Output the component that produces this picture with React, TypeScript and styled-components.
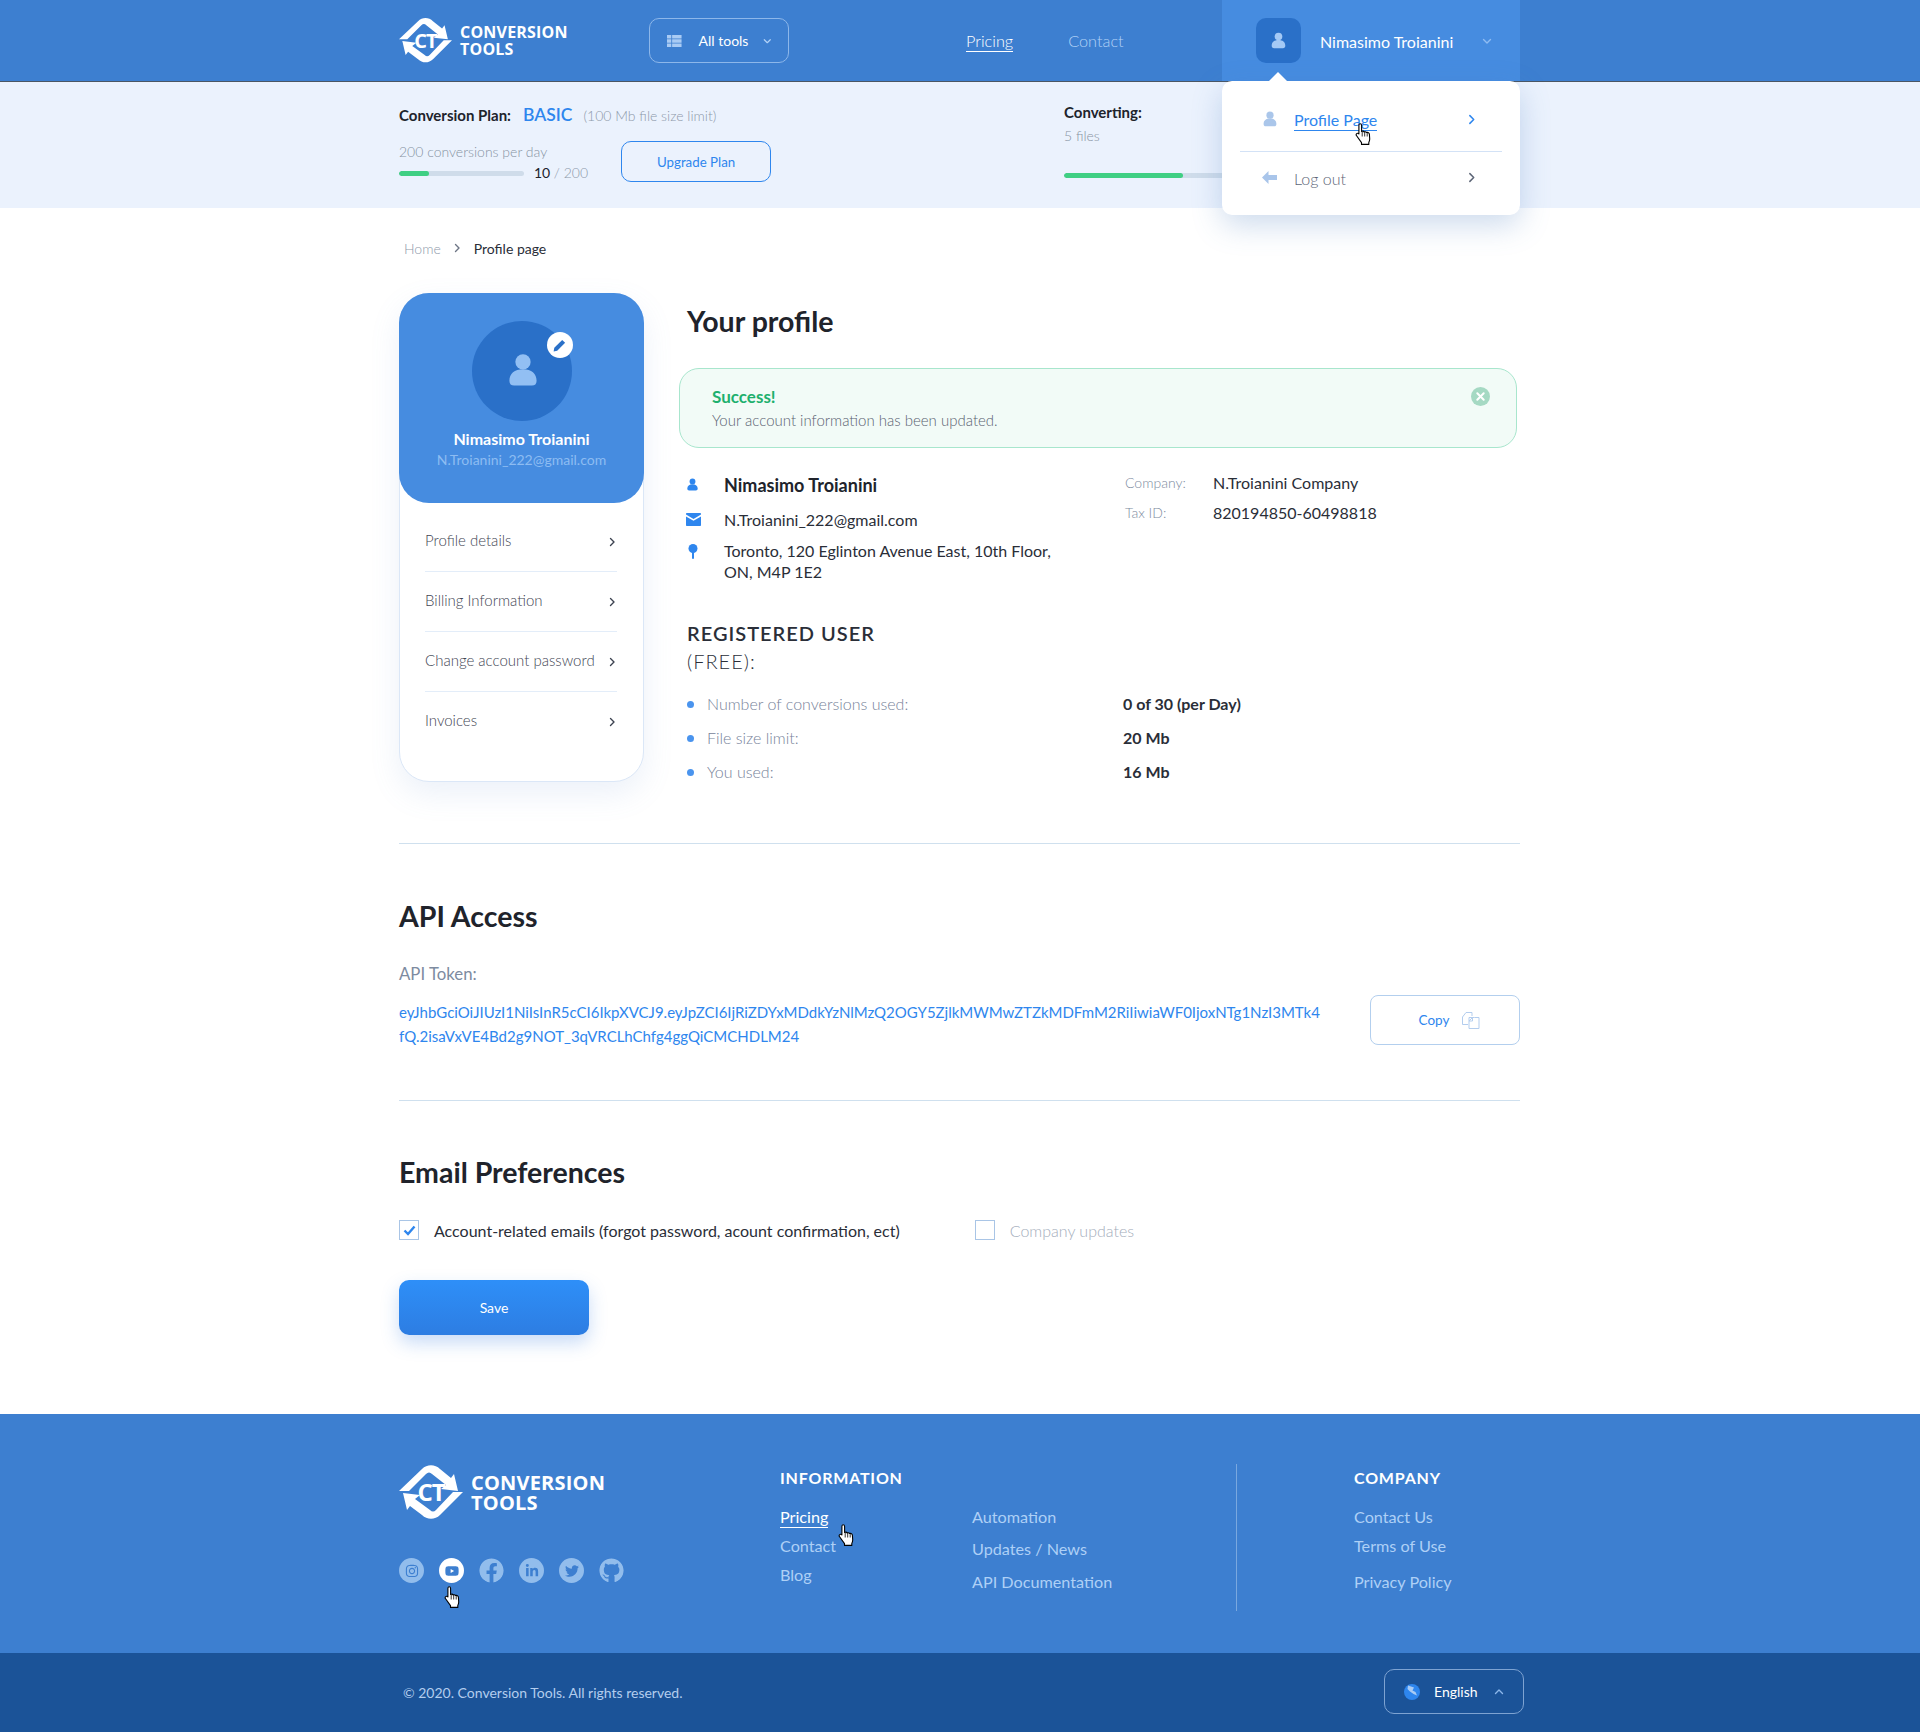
import React from "react";
import styled, { createGlobalStyle } from "styled-components";
import {
  FaFacebook,
  FaGithub,
  FaInstagram,
  FaLinkedinIn,
  FaTwitter,
  FaYoutube,
} from "react-icons/fa";

const GlobalStyle = createGlobalStyle`
  html, body {
    margin: 0;
    padding: 0;
    background: #ffffff;
    font-family: Lato, "Open Sans", sans-serif;
    color: #20232b;
  }
  * { box-sizing: border-box; }
  a { text-decoration: none; color: inherit; }
`;

const Wrap = styled.div`
  width: 1121px;
  margin: 0 0 0 399px;
`;

const Chevron: React.FC<{ dir?: "right" | "down" | "up"; size?: number; color?: string }> = ({
  dir = "right",
  size = 10,
  color = "#3c4250",
}) => {
  const d = dir === "right" ? "M3.5 1.5 7 5 3.5 8.5" : dir === "down" ? "M1.5 3.5 5 7l3.5-3.5" : "M1.5 6.5 5 3l3.5 3.5";
  return (
    <svg width={size} height={size} viewBox="0 0 10 10" fill="none">
      <path d={d} stroke={color} strokeWidth="1.4" strokeLinecap="round" strokeLinejoin="round" />
    </svg>
  );
};

const PersonIcon: React.FC<{ size?: number; color: string }> = ({ size = 16, color }) => (
  <svg width={size} height={size} viewBox="0 0 16 16" fill={color}>
    <circle cx="8" cy="4.2" r="3.6" />
    <path d="M1.6 13c0-3.4 2.4-5.4 6.4-5.4s6.4 2 6.4 5.4c0 1.5-.8 2.3-2.2 2.3H3.800c-1.400 0-2.200-.8-2.200-2.300z" />
  </svg>
);

const Hand: React.FC = () => (
  <svg width="18" height="24" viewBox="0 0 18 24">
    <path
      d="M5.200 1.800c.9 0 1.400.7 1.400 1.600v6.100l.6-.2c.8-.3 1.600 0 1.900.6l.6-.1c.8-.2 1.500.1 1.800.7l.6-.1c1.200-.1 2.200.7 2.300 2l.3 4.300c.1 1.500-.3 2.600-.9 3.700v2H6.500v-1.800L1.600 13.800c-.6-.8-.5-1.700.1-2.200.7-.6 1.600-.4 2.100.2l.1.100V3.400c0-.9.500-1.600 1.300-1.600z"
      fill="#fff"
      stroke="#000"
      strokeWidth="1.100"
      strokeLinejoin="round"
    />
    <path d="M7.200 9.500v5M9.700 9.500v5M12.200 10v4.500" stroke="#000" strokeWidth=".8" fill="none" />
  </svg>
);

const HandSpot = styled.span<{ $left: number; $top: number }>`
  position: absolute;
  left: ${(p) => p.$left}px;
  top: ${(p) => p.$top}px;
  display: block;
  line-height: 0;
  z-index: 5;
`;

const LogoBox = styled.div<{ $big?: boolean }>`
  display: flex;
  align-items: center;
  gap: 8px;
  color: #fff;
  flex: none;
  width: ${(p) => (p.$big ? 206 : 168)}px;
`;

const LogoMark = styled.div`
  position: relative;
  line-height: 0;
  flex: none;
`;

const LogoCT = styled.span<{ $big?: boolean }>`
  position: absolute;
  inset: 0;
  display: flex;
  align-items: center;
  justify-content: center;
  font-family: "Open Sans", sans-serif;
  font-weight: 700;
  font-size: ${(p) => (p.$big ? 24 : 20)}px;
  line-height: 1;
  letter-spacing: -1px;
`;

const LogoText = styled.div<{ $big?: boolean }>`
  font-family: "Open Sans", Lato, sans-serif;
  font-weight: 700;
  font-size: ${(p) => (p.$big ? 20 : 16)}px;
  line-height: ${(p) => (p.$big ? 20 : 17)}px;
  letter-spacing: 0.2px;
  padding-top: ${(p) => (p.$big ? 1 : 0)}px;
  white-space: nowrap;
`;

const Logo: React.FC<{ big?: boolean }> = ({ big }) => {
  const w = big ? 64 : 53;
  return (
    <LogoBox $big={big}>
      <LogoMark>
        <svg width={w} height={w * 0.875} viewBox="0 0 64 56" fill="#fff">
          <path d="M0 27 23 5c5-5 13-5 18 0l11 9 3-4 4 17-17-2 5-4L33 10c-2-2-4-2-6 0L10 27z" />
          <path d="M64 28 41 51c-5 5-13 5-18 0l-12-9-3 4-4-17 17 2-5 4 15 11c2 2 4 2 6 0l17-18z" />
        </svg>
        <LogoCT $big={big}>CT</LogoCT>
      </LogoMark>
      <LogoText $big={big}>
        CONVERSION
        <br />
        TOOLS
      </LogoText>
    </LogoBox>
  );
};

/* header */

const Header = styled.header`
  background: #3d7fd0;
  height: 82px;
  border-bottom: 1px solid #4a5664;
`;

const HeaderRow = styled(Wrap)`
  display: flex;
  height: 81px;
  align-items: center;
  position: relative;
`;

const ToolsButton = styled.button`
  width: 140px;
  height: 45px;
  margin-left: 82px;
  display: flex;
  align-items: center;
  background: transparent;
  border: 1px solid #8db7ea;
  border-radius: 10px;
  color: #fff;
  font: 400 14px Lato, sans-serif;
  padding: 0 16px 0 17px;
  white-space: nowrap;
  flex: none;
`;

const ToolsLabel = styled.span`
  margin: 0 15px 0 17px;
`;

const NavLink = styled.a<{ $active?: boolean }>`
  font-size: 16.3px;
  font-weight: 300;
  line-height: 21px;
  color: ${(p) => (p.$active ? "#fff" : "#b2d2f7")};
  border-bottom: 1px solid ${(p) => (p.$active ? "#fff" : "transparent")};
`;

const Nav = styled.nav`
  display: flex;
  gap: 55px;
  margin-left: 177px;
`;

const UserPanel = styled.div`
  margin-left: auto;
  width: 298px;
  height: 81px;
  background: #468ce0;
  display: flex;
  align-items: center;
  padding-left: 34px;
  color: #fff;
  font-size: 16px;
`;

const UserAvatar = styled.div`
  width: 45px;
  height: 45px;
  border-radius: 10px;
  background: #2a70c8;
  display: flex;
  align-items: center;
  justify-content: center;
  margin-right: 19px;
`;

const UserName = styled.span`
  margin-right: 29px;
  padding-top: 2px;
`;

const Dropdown = styled.div`
  position: absolute;
  z-index: 3;
  top: 81px;
  right: 0;
  width: 298px;
  height: 134px;
  background: #fff;
  border-radius: 10px;
  box-shadow: 0 10px 30px rgba(75, 125, 190, 0.28);
  padding: 0 18px;
  &::before {
    content: "";
    position: absolute;
    top: -9px;
    left: 47px;
    border: 9px solid transparent;
    border-top: 0;
    border-bottom-color: #fff;
  }
`;

const DropItem = styled.div<{ $line?: boolean }>`
  height: ${(p) => (p.$line ? 71 : 60)}px;
  display: flex;
  align-items: center;
  padding: ${(p) => (p.$line ? "9px 0 0 22px" : "0 0 6px 22px")};
  border-bottom: ${(p) => (p.$line ? "1px solid #d3e2f6" : "none")};
  position: relative;
`;

const DropIcon = styled.span`
  width: 32px;
  display: flex;
  margin-top: -3px;
`;

const DropLink = styled.a<{ $on?: boolean }>`
  font-size: 16px;
  font-weight: ${(p) => (p.$on ? 400 : 300)};
  line-height: 20px;
  color: ${(p) => (p.$on ? "#2e86ee" : "#5d6677")};
  border-bottom: 1px solid ${(p) => (p.$on ? "#2e86ee" : "transparent")};
`;

const DropChevron = styled.span`
  margin-left: auto;
  margin-right: 25px;
  display: flex;
  margin-top: -3px;
`;

/* plan strip */

const PlanStrip = styled.section`
  background: #ebf2fd;
  height: 126px;
`;

const PlanRow = styled(Wrap)`
  display: flex;
  padding-top: 22px;
`;

const PlanLeft = styled.div`
  width: 665px;
`;

const PlanLine = styled.div`
  display: flex;
  align-items: baseline;
  height: 24px;
`;

const PlanTitle = styled.span`
  font-size: 15px;
  font-weight: 700;
  color: #20232b;
`;

const PlanName = styled.span`
  font-size: 17.5px;
  font-weight: 600;
  color: #2e86ee;
  margin: 0 11px 0 12px;
`;

const PlanNote = styled.span`
  font-size: 14px;
  font-weight: 300;
  color: #8e99aa;
`;

const UsageRow = styled.div`
  display: flex;
  margin-top: 15px;
`;

const UsageLabel = styled.div`
  font-size: 14px;
  font-weight: 300;
  color: #8792a3;
  line-height: 18px;
`;

const BarLine = styled.div`
  display: flex;
  align-items: center;
  margin-top: 2px;
  font-size: 14px;
  line-height: 20px;
`;

const Track = styled.div<{ $w: number }>`
  width: ${(p) => p.$w}px;
  height: 5px;
  border-radius: 3px;
  background: #cfdcea;
  overflow: hidden;
`;

const Fill = styled.div`
  height: 100%;
  border-radius: 3px;
  background: #3fcf83;
`;

const Count = styled.span`
  margin-left: 10px;
  font-weight: 400;
  span {
    color: #8e99aa;
    font-weight: 300;
  }
`;

const UpgradeButton = styled.button`
  width: 150px;
  height: 41px;
  margin: -2px 0 0 33px;
  background: transparent;
  border: 1px solid #2e86ee;
  border-radius: 10px;
  color: #2e86ee;
  font: 400 13.3px Lato, sans-serif;
`;

const ConvTitle = styled.div`
  font-size: 15px;
  font-weight: 700;
  line-height: 20px;
  margin-top: -2px;
`;

const ConvFiles = styled.div`
  font-size: 14px;
  font-weight: 300;
  color: #8792a3;
  margin-top: 5px;
  line-height: 18px;
`;

const ConvBar = styled.div`
  margin-top: 28px;
`;

/* main */

const Crumbs = styled.div`
  display: flex;
  align-items: center;
  height: 20px;
  margin-top: 30px;
  padding-left: 5px;
  font-size: 14px;
  gap: 11px;
`;

const CrumbHome = styled.a`
  color: #8e99aa;
  font-weight: 300;
`;

const CrumbNow = styled.span`
  color: #2a2e38;
  margin-left: 1px;
`;

const ProfileGrid = styled.div`
  display: flex;
  height: 489px;
  margin-top: 35px;
`;

const Side = styled.aside`
  width: 245px;
  height: 489px;
  border: 1px solid #dbe7f7;
  border-radius: 30px;
  background: #fff;
  box-shadow: 0 12px 30px rgba(110, 150, 210, 0.13);
  flex: none;
`;

const SideHead = styled.div`
  margin: -1px;
  height: 210px;
  border-radius: 30px;
  background: #468ce0;
  display: flex;
  flex-direction: column;
  align-items: center;
  padding-top: 28px;
`;

const BigAvatar = styled.div`
  width: 100px;
  height: 100px;
  border-radius: 50%;
  background: #2a70c8;
  display: flex;
  align-items: center;
  justify-content: center;
  position: relative;
  flex: none;
  padding: 0 0 3px 3px;
`;

const EditBadge = styled.span`
  position: absolute;
  top: 11px;
  right: -1px;
  width: 26px;
  height: 26px;
  border-radius: 50%;
  background: #fff;
  display: flex;
  align-items: center;
  justify-content: center;
`;

const SideName = styled.div`
  color: #fff;
  font-size: 16px;
  font-weight: 700;
  margin-top: 8px;
  line-height: 20px;
`;

const SideMail = styled.div`
  color: #8dbcf2;
  font-size: 14px;
  font-weight: 400;
  margin-top: 2px;
  line-height: 18px;
`;

const SideMenu = styled.div`
  padding: 10px 26px 0 25px;
`;

const SideItem = styled.a<{ $last?: boolean }>`
  display: flex;
  align-items: center;
  justify-content: space-between;
  height: 60px;
  padding-bottom: 4px;
  font-size: 15px;
  font-weight: 300;
  color: #3f4654;
  border-bottom: ${(p) => (p.$last ? "none" : "1px solid #e3edf9")};
`;

const SideArrow = styled.span`
  display: flex;
  margin-top: 4px;
`;

const Main = styled.main`
  flex: 1;
  margin-left: 35px;
`;

const H1 = styled.h1`
  font-size: 28.5px;
  font-weight: 700;
  line-height: 34px;
  margin: 11px 0 0 8px;
  color: #20232b;
`;

const H2 = styled.h2`
  font-size: 28.5px;
  font-weight: 700;
  line-height: 34px;
  margin: 0;
  color: #20232b;
`;

const Alert = styled.div`
  position: relative;
  height: 80px;
  width: 838px;
  margin-top: 30px;
  border: 1px solid #a8e6cd;
  border-radius: 20px;
  background: #f2fbf7;
  padding: 18px 32px;
`;

const AlertTitle = styled.div`
  color: #1eb06e;
  font-size: 17px;
  font-weight: 700;
  line-height: 20px;
`;

const AlertText = styled.div`
  color: #5a6271;
  font-size: 15px;
  font-weight: 300;
  line-height: 18px;
  margin-top: 4px;
`;

const AlertClose = styled.span`
  position: absolute;
  top: 18px;
  right: 26px;
  line-height: 0;
`;

const InfoGrid = styled.div`
  display: flex;
  margin-top: 26px;
  padding-left: 7px;
`;

const InfoLeft = styled.div`
  width: 439px;
`;

const InfoRow = styled.div<{ $mt: number }>`
  display: flex;
  margin-top: ${(p) => p.$mt}px;
`;

const InfoIcon = styled.span`
  width: 38px;
  flex: none;
  padding-top: 4px;
  line-height: 0;
`;

const InfoName = styled.div`
  font-size: 18px;
  font-weight: 700;
  line-height: 22px;
`;

const InfoText = styled.div`
  font-size: 16px;
  font-weight: 400;
  line-height: 21px;
  color: #2a2e38;
`;

const InfoRight = styled.div`
  display: grid;
  grid-template-columns: 88px auto;
  grid-auto-rows: 30px;
  align-items: center;
  margin-top: -7px;
  align-content: start;
`;

const MetaKey = styled.span`
  font-size: 14px;
  font-weight: 300;
  color: #7d8ba0;
`;

const MetaVal = styled.span`
  font-size: 16px;
  color: #2a2e38;
`;

const Tier = styled.div`
  padding-left: 8px;
  margin-top: 37px;
  font-size: 20px;
  line-height: 28px;
  letter-spacing: 1px;
  font-weight: 600;
  color: #2a2e38;
`;

const TierSub = styled.div`
  font-weight: 300;
`;

const Stats = styled.div`
  display: grid;
  grid-template-columns: 436px auto;
  grid-auto-rows: 34px;
  align-items: center;
  margin-top: 11px;
  padding-left: 8px;
`;

const StatKey = styled.span`
  position: relative;
  padding-left: 20px;
  font-size: 16px;
  font-weight: 300;
  color: #77839a;
  &::before {
    content: "";
    position: absolute;
    left: 0;
    top: 7px;
    width: 7px;
    height: 7px;
    border-radius: 50%;
    background: #4a94ee;
  }
`;

const StatVal = styled.span`
  font-size: 16px;
  font-weight: 700;
  color: #2a2e38;
`;

const Divider = styled.hr<{ $mt: number }>`
  border: 0;
  height: 1px;
  background: #cfe0ee;
  margin: ${(p) => p.$mt}px 0 0;
`;

const TitleRow = styled.div<{ $mt: number }>`
  margin-top: ${(p) => p.$mt}px;
`;

const TokenLabel = styled.div`
  font-size: 16.8px;
  font-weight: 400;
  color: #7d8ba0;
  line-height: 20px;
  margin-top: 31px;
`;

const TokenRow = styled.div`
  display: flex;
  justify-content: space-between;
  align-items: flex-start;
  margin-top: 11px;
`;

const TokenText = styled.div`
  font-size: 15px;
  line-height: 24px;
  color: #2e86ee;
  padding-top: 5px;
  white-space: nowrap;
`;

const CopyButton = styled.button`
  width: 150px;
  height: 50px;
  background: #fff;
  border: 1px solid #b3cfee;
  border-radius: 8px;
  color: #2e86ee;
  font: 400 13.5px Lato, sans-serif;
  display: flex;
  align-items: center;
  justify-content: center;
  gap: 13px;
  padding-left: 15px;
`;

const CheckRow = styled.div`
  display: flex;
  align-items: center;
  margin-top: 30px;
  height: 22px;
`;

const Box = styled.span<{ $gap?: number }>`
  width: 20px;
  height: 20px;
  border: 1px solid #a9c5e6;
  display: flex;
  align-items: center;
  justify-content: center;
  margin-left: ${(p) => p.$gap || 0}px;
  flex: none;
`;

const CheckLabel = styled.span<{ $off?: boolean }>`
  font-size: 16px;
  font-weight: ${(p) => (p.$off ? 300 : 400)};
  color: ${(p) => (p.$off ? "#a4adbb" : "#2a2e38")};
  margin-left: 15px;
`;

const SaveButton = styled.button`
  display: block;
  width: 190px;
  height: 55px;
  margin-top: 39px;
  border: 0;
  border-radius: 10px;
  background: linear-gradient(180deg, #2e8ff8, #2d7de2);
  box-shadow: 0 8px 18px rgba(60, 130, 225, 0.28);
  color: #fff;
  font: 400 14px Lato, sans-serif;
`;

/* footer */

const Footer = styled.footer`
  margin-top: 79px;
  background: #3d7fd0;
  height: 239px;
`;

const FooterRow = styled(Wrap)`
  display: flex;
  padding-top: 50px;
  position: relative;
`;

const FooterBrand = styled.div`
  width: 381px;
`;

const Socials = styled.div`
  display: flex;
  gap: 15px;
  margin-top: 38px;
  position: relative;
`;

const Social = styled.span<{ $on?: boolean }>`
  width: 25px;
  height: 25px;
  border-radius: 50%;
  background: ${(p) => (p.$on ? "#fff" : "#92bdec")};
  color: #3d7fd0;
  display: flex;
  align-items: center;
  justify-content: center;
  font-size: 14px;
  overflow: hidden;
`;

const FullGlyph = styled.span`
  display: flex;
  background: #3d7fd0;
  color: #92bdec;
  font-size: 25px;
`;

const FootCol = styled.div<{ $w: number }>`
  width: ${(p) => p.$w}px;
  position: relative;
`;

const FootHead = styled.div`
  font-size: 16px;
  font-weight: 700;
  letter-spacing: 0.8px;
  color: #fff;
  line-height: 20px;
  height: 20px;
  margin-top: 4px;
`;

const FootLinks = styled.div`
  display: flex;
  flex-direction: column;
  align-items: flex-start;
  margin-top: 18px;
`;

const FootLink = styled.a<{ $on?: boolean; $mt?: number }>`
  font-size: 16.2px;
  line-height: 21px;
  font-weight: 400;
  margin-top: ${(p) => p.$mt || 0}px;
  color: ${(p) => (p.$on ? "#fff" : "#aed0f6")};
  border-bottom: 1px solid ${(p) => (p.$on ? "#fff" : "transparent")};
`;

const FootRule = styled.div`
  width: 1px;
  height: 147px;
  background: #7aa8df;
  margin-right: 117px;
`;

const Bottom = styled.div`
  background: #1b5398;
  height: 81px;
`;

const BottomRow = styled(Wrap)`
  display: flex;
  align-items: center;
  justify-content: space-between;
  height: 81px;
  padding: 0 0 2px 4px;
`;

const Copyright = styled.div`
  font-size: 14px;
  font-weight: 400;
  color: #b3cdee;
`;

const LangButton = styled.button`
  width: 140px;
  height: 45px;
  margin: 0 -4px 2px 0;
  background: transparent;
  border: 1px solid #7ea3d2;
  border-radius: 10px;
  color: #fff;
  font: 400 14px Lato, sans-serif;
  display: flex;
  align-items: center;
  padding: 0 17px 0 19px;
`;

const LangLabel = styled.span`
  margin: 0 16px 0 14px;
`;

const Content = styled(Wrap)``;

export default function App() {
  return (
    <>
      <GlobalStyle />
      <Header>
        <HeaderRow>
          <Logo />
          <ToolsButton>
            <svg width="17" height="14" viewBox="0 0 17 14" fill="#a9cbf4">
              <path d="M0 0h5v4H0zM6 0h11v4H6zM0 5h5v4H0zM6 5h11v4H6zM0 10h5v4H0zM6 10h11v4H6z" />
            </svg>
            <ToolsLabel>All tools</ToolsLabel>
            <Chevron dir="down" color="#b2d2f7" />
          </ToolsButton>
          <Nav>
            <NavLink $active>Pricing</NavLink>
            <NavLink>Contact</NavLink>
          </Nav>
          <UserPanel>
            <UserAvatar>
              <PersonIcon color="#a4c9f5" size={17} />
            </UserAvatar>
            <UserName>Nimasimo Troianini</UserName>
            <Chevron dir="down" color="#8fbcf2" />
          </UserPanel>
          <Dropdown>
            <DropItem $line>
              <DropIcon>
                <PersonIcon color="#aac6ea" size={16} />
              </DropIcon>
              <DropLink $on>Profile Page</DropLink>
              <DropChevron>
                <Chevron color="#2e86ee" size={11} />
              </DropChevron>
              <HandSpot $left={115} $top={41}>
                <Hand />
              </HandSpot>
            </DropItem>
            <DropItem>
              <DropIcon>
                <svg width="15" height="13" viewBox="0 0 15 13" fill="#a9c5ea">
                  <path d="M0 6.500 6.500 0v4H15v5H6.500v4z" />
                </svg>
              </DropIcon>
              <DropLink>Log out</DropLink>
              <DropChevron>
                <Chevron color="#5d6677" size={11} />
              </DropChevron>
            </DropItem>
          </Dropdown>
        </HeaderRow>
      </Header>

      <PlanStrip>
        <PlanRow>
          <PlanLeft>
            <PlanLine>
              <PlanTitle>Conversion Plan:</PlanTitle>
              <PlanName>BASIC</PlanName>
              <PlanNote>(100 Mb file size limit)</PlanNote>
            </PlanLine>
            <UsageRow>
              <div>
                <UsageLabel>200 conversions per day</UsageLabel>
                <BarLine>
                  <Track $w={125}>
                    <Fill style={{ width: `${(30 / 125) * 100}%` }} />
                  </Track>
                  <Count>
                    10 <span>/ 200</span>
                  </Count>
                </BarLine>
              </div>
              <UpgradeButton>Upgrade Plan</UpgradeButton>
            </UsageRow>
          </PlanLeft>
          <div>
            <ConvTitle>Converting:</ConvTitle>
            <ConvFiles>5 files</ConvFiles>
            <ConvBar>
              <Track $w={170}>
                <Fill style={{ width: `${(119 / 170) * 100}%` }} />
              </Track>
            </ConvBar>
          </div>
        </PlanRow>
      </PlanStrip>

      <Content>
        <Crumbs>
          <CrumbHome>Home</CrumbHome>
          <Chevron size={10} color="#6d7585" />
          <CrumbNow>Profile page</CrumbNow>
        </Crumbs>

        <ProfileGrid>
          <Side>
            <SideHead>
              <BigAvatar>
                <PersonIcon color="#92bff3" size={34} />
                <EditBadge>
                  <svg width="13" height="13" viewBox="0 0 13 13" fill="#2a70c8">
                    <path d="M9.200.9 12.100 3.800 4.200 11.700.6 12.400l.7-3.600z" />
                  </svg>
                </EditBadge>
              </BigAvatar>
              <SideName>Nimasimo Troianini</SideName>
              <SideMail>N.Troianini_222@gmail.com</SideMail>
            </SideHead>
            <SideMenu>
              {["Profile details", "Billing Information", "Change account password", "Invoices"].map((label, i) => (
                <SideItem key={label} $last={i === 3}>
                  {label}
                  <SideArrow>
                    <Chevron />
                  </SideArrow>
                </SideItem>
              ))}
            </SideMenu>
          </Side>

          <Main>
            <H1>Your profile</H1>
            <Alert>
              <AlertTitle>Success!</AlertTitle>
              <AlertText>Your account information has been updated.</AlertText>
              <AlertClose>
                <svg width="19" height="19" viewBox="0 0 19 19">
                  <circle cx="9.500" cy="9.500" r="9.500" fill="#a5d9c3" />
                  <path d="M6.300 6.300l6.400 6.400M12.700 6.300l-6.400 6.400" stroke="#fff" strokeWidth="2" strokeLinecap="round" />
                </svg>
              </AlertClose>
            </Alert>

            <InfoGrid>
              <InfoLeft>
                <InfoRow $mt={0}>
                  <InfoIcon>
                    <PersonIcon color="#2e86ee" size={13} />
                  </InfoIcon>
                  <InfoName>Nimasimo Troianini</InfoName>
                </InfoRow>
                <InfoRow $mt={13}>
                  <InfoIcon>
                    <svg width="15" height="13" viewBox="0 0 15 13" fill="#2e86ee">
                      <path d="M0 1c0-.6.400-1 1-1h13c.6 0 1 .4 1 1v.6L7.500 6 0 1.600zM0 3.400l7.500 4.400L15 3.400V12c0 .6-.4 1-1 1H1c-.6 0-1-.4-1-1z" />
                    </svg>
                  </InfoIcon>
                  <InfoText>N.Troianini_222@gmail.com</InfoText>
                </InfoRow>
                <InfoRow $mt={10}>
                  <InfoIcon>
                    <svg width="13" height="15" viewBox="0 0 13 15" fill="#2e86ee">
                      <circle cx="7" cy="4.500" r="4.500" />
                      <rect x="6" y="7" width="2" height="8" rx="1" />
                    </svg>
                  </InfoIcon>
                  <InfoText>
                    Toronto, 120 Eglinton Avenue East, 10th Floor,
                    <br />
                    ON, M4P 1E2
                  </InfoText>
                </InfoRow>
              </InfoLeft>
              <InfoRight>
                <MetaKey>Company:</MetaKey>
                <MetaVal>N.Troianini Company</MetaVal>
                <MetaKey>Tax ID:</MetaKey>
                <MetaVal>820194850-60498818</MetaVal>
              </InfoRight>
            </InfoGrid>

            <Tier>
              REGISTERED USER
              <TierSub>(FREE):</TierSub>
            </Tier>
            <Stats>
              <StatKey>Number of conversions used:</StatKey>
              <StatVal>0 of 30 (per Day)</StatVal>
              <StatKey>File size limit:</StatKey>
              <StatVal>20 Mb</StatVal>
              <StatKey>You used:</StatKey>
              <StatVal>16 Mb</StatVal>
            </Stats>
          </Main>
        </ProfileGrid>

        <Divider $mt={61} />

        <TitleRow $mt={55}>
          <H2>API Access</H2>
        </TitleRow>
        <TokenLabel>API Token:</TokenLabel>
        <TokenRow>
          <TokenText>
            eyJhbGciOiJIUzI1NiIsInR5cCI6IkpXVCJ9.eyJpZCI6IjRiZDYxMDdkYzNlMzQ2OGY5ZjlkMWMwZTZkMDFmM2RiIiwiaWF0IjoxNTg1NzI3MTk4
            <br />
            fQ.2isaVxVE4Bd2g9NOT_3qVRCLhChfg4ggQiCMCHDLM24
          </TokenText>
          <CopyButton>
            Copy
            <svg width="18" height="17" viewBox="0 0 18 17" fill="none" stroke="#b3cdee" strokeWidth="1">
              <path d="M6 12.500H.5V5L4 .5h6V4" />
              <path d="M7 5.500h5.500v0H17v11H7V9z" />
              <path d="M7 9l3.500-3.500V9z" />
            </svg>
          </CopyButton>
        </TokenRow>

        <Divider $mt={52} />

        <TitleRow $mt={54}>
          <H2>Email Preferences</H2>
        </TitleRow>
        <CheckRow>
          <Box>
            <svg width="13" height="11" viewBox="0 0 13 11" fill="none">
              <path d="M1.500 5.500 5 9l6.500-7.500" stroke="#2e86ee" strokeWidth="2.400" />
            </svg>
          </Box>
          <CheckLabel>Account-related emails (forgot password, acount confirmation, ect)</CheckLabel>
          <Box $gap={75} />
          <CheckLabel $off>Company updates</CheckLabel>
        </CheckRow>
        <SaveButton>Save</SaveButton>
      </Content>

      <Footer>
        <FooterRow>
          <FooterBrand>
            <Logo big />
            <Socials>
              <Social>
                <FaInstagram />
              </Social>
              <Social $on>
                <FaYoutube />
              </Social>
              <Social>
                <FullGlyph>
                  <FaFacebook />
                </FullGlyph>
              </Social>
              <Social>
                <FaLinkedinIn />
              </Social>
              <Social>
                <FaTwitter />
              </Social>
              <Social>
                <FullGlyph>
                  <FaGithub />
                </FullGlyph>
              </Social>
              <HandSpot $left={45} $top={27}>
                <Hand />
              </HandSpot>
            </Socials>
          </FooterBrand>
          <FootCol $w={192}>
            <FootHead>INFORMATION</FootHead>
            <FootLinks>
              <FootLink $on>Pricing</FootLink>
              <FootLink $mt={7}>Contact</FootLink>
              <FootLink $mt={7}>Blog</FootLink>
            </FootLinks>
            <HandSpot $left={58} $top={59}>
              <Hand />
            </HandSpot>
          </FootCol>
          <FootCol $w={264}>
            <FootHead />
            <FootLinks>
              <FootLink>Automation</FootLink>
              <FootLink $mt={10}>Updates / News</FootLink>
              <FootLink $mt={11}>API Documentation</FootLink>
            </FootLinks>
          </FootCol>
          <FootRule />
          <FootCol $w={166}>
            <FootHead>COMPANY</FootHead>
            <FootLinks>
              <FootLink>Contact Us</FootLink>
              <FootLink $mt={7}>Terms of Use</FootLink>
              <FootLink $mt={14}>Privacy Policy</FootLink>
            </FootLinks>
          </FootCol>
        </FooterRow>
      </Footer>
      <Bottom>
        <BottomRow>
          <Copyright>© 2020. Conversion Tools. All rights reserved.</Copyright>
          <LangButton>
            <svg width="16" height="16" viewBox="0 0 16 16">
              <circle cx="8" cy="8" r="8" fill="#2e86ee" />
              <path d="M4 1.500 10 3.500 8.500 6.500 11.500 8 13 11.500 9.500 10 6 7.500 3.500 5z" fill="#a9cbf4" />
            </svg>
            <LangLabel>English</LangLabel>
            <Chevron dir="up" color="#8db7ea" />
          </LangButton>
        </BottomRow>
      </Bottom>
    </>
  );
}
